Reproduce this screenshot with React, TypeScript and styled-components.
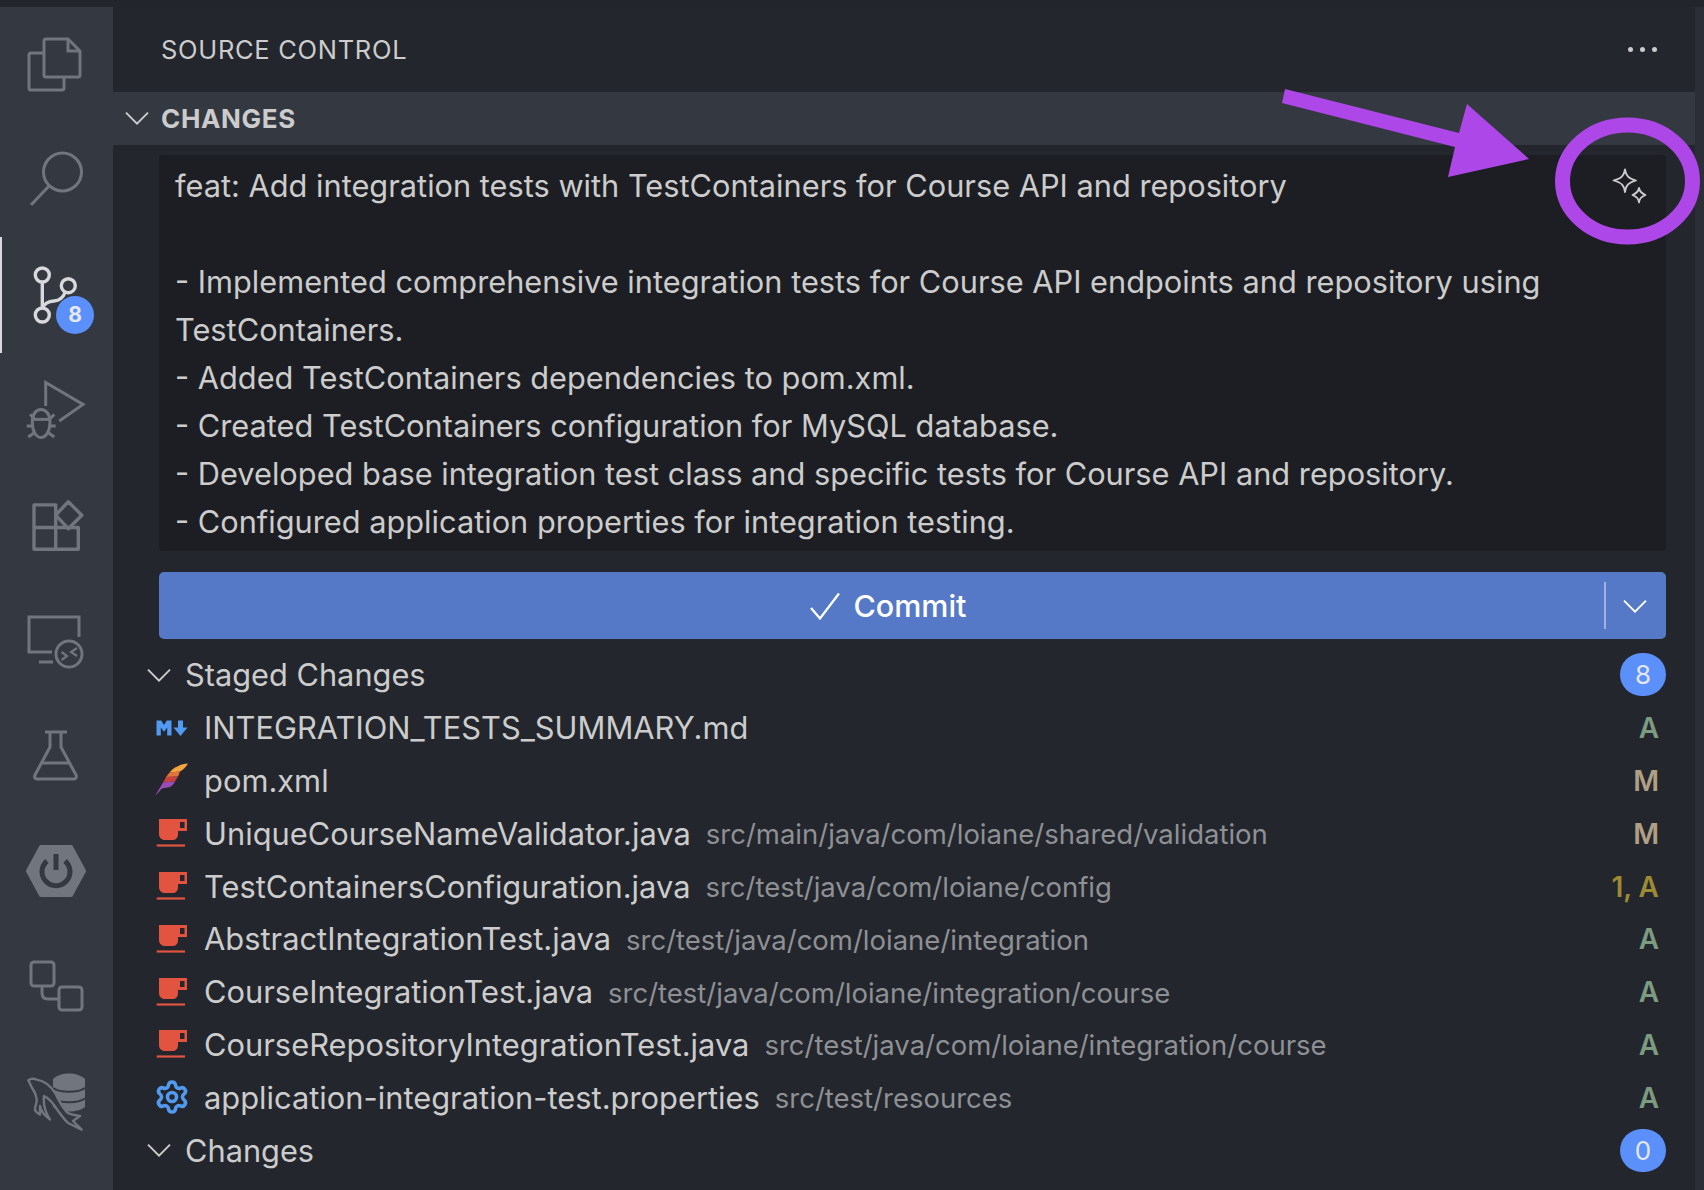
import React from "react";
import styled, { createGlobalStyle } from "styled-components";
import { Settings } from "lucide-react";

const UI_FONT = `Inter, "Liberation Sans", sans-serif`;

type StatusKind = "added" | "modified" | "warning";

const FILES: { icon: string; name: string; path?: string; status: string; kind: StatusKind }[] = [
  { icon: "md", name: "INTEGRATION_TESTS_SUMMARY.md", status: "A", kind: "added" },
  { icon: "xml", name: "pom.xml", status: "M", kind: "modified" },
  { icon: "java", name: "UniqueCourseNameValidator.java", path: "src/main/java/com/loiane/shared/validation", status: "M", kind: "modified" },
  { icon: "java", name: "TestContainersConfiguration.java", path: "src/test/java/com/loiane/config", status: "1, A", kind: "warning" },
  { icon: "java", name: "AbstractIntegrationTest.java", path: "src/test/java/com/loiane/integration", status: "A", kind: "added" },
  { icon: "java", name: "CourseIntegrationTest.java", path: "src/test/java/com/loiane/integration/course", status: "A", kind: "added" },
  { icon: "java", name: "CourseRepositoryIntegrationTest.java", path: "src/test/java/com/loiane/integration/course", status: "A", kind: "added" },
  { icon: "gear", name: "application-integration-test.properties", path: "src/test/resources", status: "A", kind: "added" },
];

const MESSAGE = `feat: Add integration tests with TestContainers for Course API and repository

- Implemented comprehensive integration tests for Course API endpoints and repository using TestContainers.
- Added TestContainers dependencies to pom.xml.
- Created TestContainers configuration for MySQL database.
- Developed base integration test class and specific tests for Course API and repository.
- Configured application properties for integration testing.`;

const Chevron = ({ size = 24 }: { size?: number }) => (
  <svg width={size} height={size * 0.6} viewBox="0 0 24 14" fill="none">
    <polyline points="1,1.5 12,12.5 23,1.5" stroke="currentColor" strokeWidth="1.9" />
  </svg>
);

const FileIcon = ({ kind }: { kind: string }) => {
  if (kind === "md") {
    return (
      <svg width="34" height="34" viewBox="0 0 34 34" fill="#519aef">
        <path d="M1.500 9.500H6.200L9 14L11.800 9.500H16.500V24.500H12.200V16.500L9 20.800L5.800 16.500V24.500H1.500Z" />
        <path d="M23 9.500H28V16.500H32.500L25.500 25L18.500 16.500H23Z" />
      </svg>
    );
  }
  if (kind === "xml") {
    return (
      <svg width="34" height="34" viewBox="0 0 34 34">
        <path d="M33 0.500C26 1 19 4 14.500 9.500L25 8.500C28.500 6.500 31 4 33 0.500Z" fill="#f4a53e" />
        <path d="M14.500 9.500L11 14L23 13.500L25 8.500Z" fill="#e5743b" />
        <path d="M11 14L8 19.500L20 18.500L23 13.500Z" fill="#c9413e" />
        <path d="M8 19.500C5 24.500 2 29 0 33C3 30 5 27.500 7 25.500L15 24C17 23 19 21 20 18.500Z" fill="#9a4bb5" />
      </svg>
    );
  }
  if (kind === "java") {
    return (
      <svg width="34" height="34" viewBox="0 0 34 34" fill="#e25440">
        <path fillRule="evenodd" d="M4 3H32V15H23V18C23 21.500 21 24 18 24H10C6.500 24 4 21.500 4 18ZM25 6V12H29.500V6Z" />
        <rect x="1.700" y="28.400" width="28.300" height="2.200" />
      </svg>
    );
  }
  return <S.GearIcon size={36} color="#519aef" strokeWidth={2.4} />;
};

const ACTIVITY_ICONS: React.ReactNode[] = [
  <>
    <path d="M20 18H7a2 2 0 0 0-2 2v33a2 2 0 0 0 2 2h31a2 2 0 0 0 2-2V42" />
    <path d="M22 4H44L56 16V40a2 2 0 0 1-2 2H22a2 2 0 0 1-2-2V6a2 2 0 0 1 2-2Z" />
    <path d="M44 4V16H56" />
  </>,
  <>
    <circle cx="38.500" cy="22" r="19" />
    <path d="M25 36L7 55" />
  </>,
  <>
    <circle cx="18.300" cy="10" r="7" strokeWidth="3.400" />
    <circle cx="44.300" cy="20.700" r="7" strokeWidth="3.400" />
    <circle cx="18.300" cy="50" r="7" strokeWidth="3.400" />
    <path d="M18.300 17V43" strokeWidth="3.400" />
    <path d="M41 27.500C39 33 36 35.500 30 36C24 36.500 20.500 38 18.300 43" strokeWidth="3.400" />
  </>,
  <>
    <path d="M21.700 26V2.500L59 24.400L35.300 41" />
    <path d="M8.300 42C8.300 34 12 29.500 17 29.500C22 29.500 26 34 26 42C26 51 22 57.500 17 57.500C12 57.500 8.300 51 8.300 42Z" />
    <path d="M8.300 39.400H26" />
    <path d="M6 34.400L10.300 38.700M30.300 34.400L26 38.700M2.700 46H8.300M31.700 46H26M4.300 57L10.300 52.700M30.300 57L24.300 52.700" />
  </>,
  <>
    <path d="M10 9.900H31.700V54.200H10ZM10 32.500H54.300V54.200H31.700" strokeWidth="3.400" strokeLinejoin="round" />
    <path d="M44.300 6.700L57.800 20.200L44.300 33.700L31.700 20.200Z" strokeWidth="3.400" strokeLinejoin="round" />
  </>,
  <>
    <path d="M55 26V6H5V41H28" />
    <path d="M15 51H29" />
    <circle cx="45" cy="43" r="13" />
    <path d="M37.500 41L43 45L37.500 49M53 37L47 41L53 45" strokeWidth="2.200" />
  </>,
  <>
    <path d="M21 6H43" />
    <path d="M26 6V21L11 49C10 51 11 53 13 53H50C52 53 53 51 52 49L37 21V6" />
    <path d="M18 37H45" />
  </>,
  <>
    <path
      d="M4 30L17 6H47L60 30L47 54H17Z"
      fill="#71757d"
      stroke="#71757d"
      strokeLinejoin="round"
      strokeWidth="4"
    />
    <path d="M23 20A14 14 0 1 0 41 20" stroke="#343841" strokeWidth="5" />
    <path d="M32 13V29" stroke="#343841" strokeWidth="5" />
  </>,
  <>
    <rect x="7" y="6" width="23" height="24" rx="3" />
    <rect x="35" y="31" width="23" height="23" rx="3" />
    <path d="M18 30V37C18 41 20 43 24 43H35" />
  </>,
  <>
    <path d="M29 8C36 0.500 54 0.500 61 8V36C54 42 36 42 29 36Z" fill="#71757d" stroke="none" />
    <path d="M29 17C36 22 54 22 61 17M29 27.500C36 32.500 54 32.500 61 27.500" stroke="#343841" strokeWidth="2" />
    <path
      d="M4.300 9.300C7 7.500 10 7.500 12.700 8.600C20 10 27 15 31 22C35 29 38 37 44 42C47 44 52 44 56 45L49 50L57.700 58.600L44 52C38 46 34 40 30 34C27 30 24 27 20 25C19 33 21 41 26 48.600C21 45 17 40 16 35L16 43.600C13 42 11 40 11 38.600C11 35 13 32 12.700 28.600C12.500 26 11.500 24 11 22C8.500 18 6 13 4.300 9.300Z"
      fill="#343841"
      strokeWidth="2.400"
      strokeLinejoin="round"
    />
  </>,
];

const App = () => {
  return (
    <>
      <GlobalStyle />
      <S.Window>
        <S.TopStrip />
        <S.Main>
          <S.ActivityBar>
            {ACTIVITY_ICONS.map((icon, i) => (
              <S.ActivityItem key={i} $active={i === 2}>
                <svg width="64" height="60" viewBox="0 0 64 60" fill="none" stroke="currentColor" strokeWidth="3">
                  {icon}
                </svg>
                {i === 2 && <S.ActivityBadge>8</S.ActivityBadge>}
              </S.ActivityItem>
            ))}
          </S.ActivityBar>
          <S.SidePanel>
            <S.PanelTitle>
              <span>SOURCE CONTROL</span>
              <S.MoreDots>
                <i />
                <i />
                <i />
              </S.MoreDots>
            </S.PanelTitle>
            <S.SectionHeader>
              <Chevron />
              <span>CHANGES</span>
            </S.SectionHeader>
            <S.CommitArea>
              <S.MessageBox>
                {MESSAGE}
                <S.SparkleButton>
                  <svg width="36" height="36" viewBox="0 0 36 36" fill="none" stroke="#cccccc" strokeWidth="1.800" strokeLinejoin="round">
                    <path d="M13 1.500C14 8 16.500 10.500 24 12.500C16.500 14.500 14 17 13 24C12 17 9.500 14.500 1.500 12.500C9.500 10.500 12 8 13 1.500Z" />
                    <path d="M27 20C27.500 23.500 29 25 33.500 27C29 29 27.500 30.500 27 34.500C26.500 30.500 25 29 20.500 27C25 25 26.500 23.500 27 20Z" />
                  </svg>
                </S.SparkleButton>
              </S.MessageBox>
              <S.CommitButton>
                <S.CommitLabel>
                  <svg width="30" height="30" viewBox="0 0 30 30" fill="none" stroke="#ffffff" strokeWidth="2.300">
                    <polyline points="1,17 10,27.500 29,2.500" />
                  </svg>
                  Commit
                </S.CommitLabel>
                <S.CommitDivider />
                <S.CommitMenu>
                  <Chevron />
                </S.CommitMenu>
              </S.CommitButton>
            </S.CommitArea>
            <S.FileList>
              <S.GroupRow>
                <Chevron />
                <S.GroupName>Staged Changes</S.GroupName>
                <S.CountBadge>8</S.CountBadge>
              </S.GroupRow>
              {FILES.map((file) => (
                <S.FileRow key={file.name}>
                  <FileIcon kind={file.icon} />
                  <S.FileName>{file.name}</S.FileName>
                  {file.path && <S.FilePath>{file.path}</S.FilePath>}
                  <S.Status $kind={file.kind}>{file.status}</S.Status>
                </S.FileRow>
              ))}
              <S.GroupRow>
                <Chevron />
                <S.GroupName>Changes</S.GroupName>
                <S.CountBadge>0</S.CountBadge>
              </S.GroupRow>
            </S.FileList>
          </S.SidePanel>
          <S.RightStrip />
        </S.Main>
        <S.Annotation width="1704" height="1190" viewBox="0 0 1704 1190">
          <polygon
            points="1285,89 1282,103 1455,147 1448,177 1529,159 1467,104 1459,133"
            fill="#ae47e8"
          />
          <ellipse cx="1627.500" cy="181" rx="65" ry="56" fill="none" stroke="#ae47e8" strokeWidth="15" />
        </S.Annotation>
      </S.Window>
    </>
  );
};

export default App;

const GlobalStyle = createGlobalStyle`
  html, body {
    margin: 0;
    padding: 0;
    background: #23262d;
  }
  * {
    box-sizing: border-box;
  }
`;

const STATUS_COLOR: Record<StatusKind, string> = {
  added: "#7c9b80",
  modified: "#b09f84",
  warning: "#9c8a35",
};

const S = {
  Window: styled.div`
    position: relative;
    width: 1704px;
    height: 1190px;
    overflow: hidden;
    display: flex;
    flex-direction: column;
    font-family: ${UI_FONT};
    color: #cccccc;
    background: #23262d;
  `,
  TopStrip: styled.div`
    height: 7px;
    background: #22252c;
  `,
  Main: styled.div`
    flex: 1;
    display: flex;
    min-height: 0;
  `,
  ActivityBar: styled.nav`
    width: 113px;
    background: #343841;
    display: flex;
    flex-direction: column;
  `,
  ActivityItem: styled.div<{ $active: boolean }>`
    position: relative;
    height: 115.2px;
    flex-shrink: 0;
    display: flex;
    align-items: center;
    padding-left: ${(props) => (props.$active ? "22px" : "24px")};
    color: ${(props) => (props.$active ? "#d7d9dd" : "#71757d")};
    border-left: ${(props) => (props.$active ? "2px solid #d7d9dd" : "none")};
  `,
  ActivityBadge: styled.span`
    position: absolute;
    left: 54px;
    top: 58.600px;
    width: 38px;
    height: 38px;
    border-radius: 50%;
    background: #5b8ff9;
    color: #e6e9f0;
    font-size: 21px;
    font-weight: 700;
    display: flex;
    align-items: center;
    justify-content: center;
  `,
  SidePanel: styled.main`
    flex: 1;
    min-width: 0;
    display: flex;
    flex-direction: column;
  `,
  PanelTitle: styled.header`
    height: 85px;
    padding: 0 38px 0 48px;
    display: flex;
    align-items: center;
    justify-content: space-between;
    font-size: 25.500px;
    letter-spacing: 0.7px;
    color: #cccccc;
  `,
  MoreDots: styled.div`
    display: flex;
    gap: 7px;
    & > i {
      width: 5px;
      height: 5px;
      border-radius: 50%;
      background: #cccccc;
    }
  `,
  SectionHeader: styled.div`
    height: 53px;
    padding-left: 12px;
    display: flex;
    align-items: center;
    gap: 12px;
    background: #343841;
    font-size: 26px;
    letter-spacing: 0.67px;
    font-weight: 700;
    color: #cccccc;
  `,
  CommitArea: styled.section`
    padding: 10px 29px 0 46px;
    display: flex;
    flex-direction: column;
    gap: 21px;
  `,
  MessageBox: styled.div`
    position: relative;
    height: 396px;
    padding: 7px 80px 5px 16px;
    border-radius: 4px;
    background: #1d1e23;
    font-size: 30.750px;
    line-height: 48px;
    white-space: pre-line;
    color: #cccccc;
  `,
  SparkleButton: styled.span`
    position: absolute;
    right: 18px;
    top: 12.500px;
    width: 36px;
    height: 36px;
  `,
  CommitButton: styled.div`
    height: 67px;
    display: flex;
    align-items: center;
    border-radius: 5px;
    background: #5679c7;
    color: #ffffff;
  `,
  CommitLabel: styled.div`
    flex: 1;
    display: flex;
    align-items: center;
    justify-content: center;
    gap: 13px;
    padding-left: 14px;
    font-size: 30.500px;
    font-weight: 500;
  `,
  CommitDivider: styled.div`
    width: 2px;
    height: 47px;
    background: #9fb2e0;
  `,
  CommitMenu: styled.div`
    width: 60px;
    display: flex;
    align-items: center;
    justify-content: center;
    & > svg {
      margin-top: 1px;
      margin-left: -2px;
    }
  `,
  FileList: styled.section`
    margin-top: 9.500px;
    display: flex;
    flex-direction: column;
  `,
  GroupRow: styled.div`
    height: 52.800px;
    padding: 0 29px 0 34px;
    display: flex;
    align-items: center;
    gap: 14px;
  `,
  GroupName: styled.span`
    flex: 1;
    font-size: 30.750px;
    color: #cccccc;
  `,
  CountBadge: styled.span`
    width: 46px;
    height: 43px;
    border-radius: 22px;
    background: #5b8ff9;
    color: #e3e7f0;
    font-size: 26px;
    display: flex;
    align-items: center;
    justify-content: center;
  `,
  FileRow: styled.div`
    height: 52.800px;
    padding: 0 36px 0 42px;
    display: flex;
    align-items: center;
    gap: 15px;
  `,
  GearIcon: styled(Settings)`
    margin: -1px;
  `,
  FileName: styled.span`
    font-size: 30.850px;
    color: #cccccc;
    white-space: nowrap;
  `,
  FilePath: styled.span`
    padding-top: 2px;
    font-size: 27.500px;
    color: #8e9094;
    white-space: nowrap;
  `,
  Status: styled.span<{ $kind: StatusKind }>`
    margin-left: auto;
    padding-top: 1px;
    font-size: 28px;
    font-weight: 600;
    color: ${(props) => STATUS_COLOR[props.$kind]};
  `,
  RightStrip: styled.div`
    width: 9px;
    background: #2b2e36;
  `,
  Annotation: styled.svg`
    position: absolute;
    left: 0;
    top: 0;
    pointer-events: none;
  `,
};
